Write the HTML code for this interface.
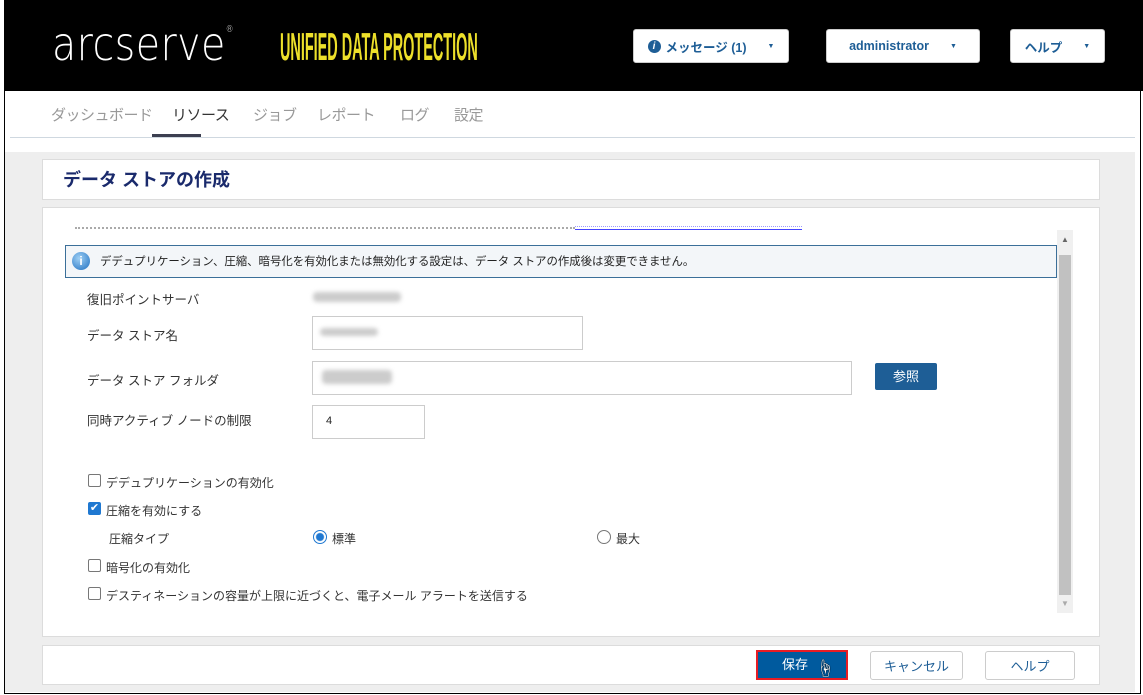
<!DOCTYPE html>
<html><head><meta charset="utf-8"><style>
*{box-sizing:border-box;margin:0;padding:0}
body{width:1143px;height:695px;background:#fff;position:relative;overflow:hidden;font-family:"Liberation Sans","Noto Sans CJK JP",sans-serif;font-size:13px;color:#222}
.a{position:absolute}
.frame{left:4px;top:0;width:1137px;height:694px;border:1px solid #000}
.hb{background:#fff;border-radius:3px;border:1px solid #ccc;color:#1e5e96;font-weight:bold;font-size:12.5px;display:flex;align-items:center;justify-content:center;gap:5px}
.car{font-size:7px;margin-left:16px}
.nav{top:104px;font-size:15px;color:#999;letter-spacing:-0.5px}
.pan{background:#fff;border:1px solid #dcdcdc}
.lab{left:87px;font-size:12.5px;color:#333}
.inp{border:1px solid #ccc;background:#fff}
.blur{background:#ccc;filter:blur(2px);border-radius:4px}
.cb{width:13px;height:13px;border:1px solid #777;border-radius:2px;background:#fff;left:88px}
.ct{left:106px;font-size:12px;color:#333}
.fb{border:1px solid #ccc;border-radius:3px;background:#fff;color:#1e5e96;font-size:13px;display:flex;align-items:center;justify-content:center}
</style></head><body>
<div class="a" style="left:5px;top:0;width:1138px;height:91px;background:#000"></div>
<div class="a" style="left:52px;top:17px;font-size:46px;color:#fff;font-family:'DejaVu Sans',sans-serif;font-weight:200;letter-spacing:0.5px;transform:scaleX(.86);transform-origin:left top;white-space:nowrap">arcserve<span style="font-size:9px;vertical-align:top;position:relative;top:8px">®</span></div>
<div class="a" style="left:280px;top:26px;font-size:39px;color:#ede02a;font-weight:bold;font-family:'Liberation Sans Narrow','Liberation Sans',sans-serif;transform:scaleX(.37);transform-origin:left top;white-space:nowrap">UNIFIED DATA PROTECTION</div>
<div class="a hb" style="left:633px;top:29px;width:156px;height:34px"><span style="display:inline-block;width:13px;height:13px;border-radius:50%;background:#1e5e96;color:#fff;font-size:10px;line-height:13px;text-align:center;font-style:italic">i</span>メッセージ (1)<span class="car">▼</span></div>
<div class="a hb" style="left:826px;top:29px;width:154px;height:34px">administrator<span class="car">▼</span></div>
<div class="a hb" style="left:1010px;top:29px;width:95px;height:34px">ヘルプ<span class="car">▼</span></div>

<div class="a nav" style="left:51px">ダッシュボード</div>
<div class="a nav" style="left:172px;color:#333">リソース</div>
<div class="a nav" style="left:253px">ジョブ</div>
<div class="a nav" style="left:317px">レポート</div>
<div class="a nav" style="left:400px">ログ</div>
<div class="a nav" style="left:454px">設定</div>
<div class="a" style="left:152px;top:134px;width:49px;height:3px;background:#3c3f50"></div>
<div class="a" style="left:10px;top:137px;width:1125px;height:1px;background:#cfd8e0"></div>

<div class="a" style="left:5px;top:152px;width:1130px;height:540px;background:#eeeeee"></div>
<div class="a pan" style="left:42px;top:159px;width:1058px;height:41px"></div>
<div class="a" style="left:63px;top:166px;font-size:18px;color:#1a2a6c;font-weight:bold">データ ストアの作成</div>

<div class="a pan" style="left:42px;top:207px;width:1058px;height:430px"></div>
<div class="a" style="left:75px;top:222px;width:500px;height:8px;overflow:hidden"><div style="border-top:2px dotted #aaa;margin-top:5px"></div></div>
<div class="a" style="left:575px;top:226px;width:227px;height:4px;border-bottom:1px solid #44f;border-top:1px dotted #99f"></div>
<div class="a" style="left:1057px;top:230px;width:16px;height:383px;background:#f0f0f0"></div>
<div class="a" style="left:1059px;top:255px;width:12px;height:340px;background:#c1c1c1"></div>
<div class="a" style="left:1061px;top:235px;font-size:8px;color:#666">▲</div>
<div class="a" style="left:1061px;top:599px;font-size:8px;color:#aaa">▼</div>

<div class="a" style="left:65px;top:245px;width:992px;height:33px;border:1px solid #3b6f99;background:#f3f6f9"></div>
<div class="a" style="left:72px;top:252px;width:18px;height:18px;border-radius:50%;background:radial-gradient(circle at 40% 35%,#9fd0f5,#1f6fc0);color:#fff;font-size:12px;font-weight:bold;text-align:center;line-height:18px">i</div>
<div class="a" style="left:100px;top:253px;font-size:11.4px;color:#222">デデュプリケーション、圧縮、暗号化を有効化または無効化する設定は、データ ストアの作成後は変更できません。</div>

<div class="a lab" style="top:289px">復旧ポイントサーバ</div>
<div class="a blur" style="left:313px;top:292px;width:88px;height:10px"></div>
<div class="a lab" style="top:325px">データ ストア名</div>
<div class="a inp" style="left:312px;top:316px;width:271px;height:34px"></div>
<div class="a blur" style="left:320px;top:328px;width:58px;height:8px"></div>
<div class="a lab" style="top:370px">データ ストア フォルダ</div>
<div class="a inp" style="left:312px;top:361px;width:540px;height:34px"></div>
<div class="a blur" style="left:322px;top:370px;width:70px;height:14px"></div>
<div class="a" style="left:875px;top:363px;width:62px;height:27px;background:#1e5e96;color:#fff;font-size:13px;text-align:center;line-height:27px;border-radius:2px">参照</div>
<div class="a lab" style="top:410px">同時アクティブ ノードの制限</div>
<div class="a inp" style="left:312px;top:405px;width:113px;height:34px"></div>
<div class="a" style="left:326px;top:415px;font-size:11px">4</div>

<div class="a cb" style="top:474px"></div><div class="a ct" style="top:474px">デデュプリケーションの有効化</div>
<div class="a cb" style="top:502px;background:#1f78d1;border-color:#1f78d1;color:#fff;font-size:11px;line-height:11px;text-align:center">✔</div><div class="a ct" style="top:502px">圧縮を有効にする</div>
<div class="a" style="left:109px;top:530px;font-size:12px;color:#333">圧縮タイプ</div>
<div class="a" style="left:313px;top:530px;width:14px;height:14px;border-radius:50%;border:1px solid #1f78d1;background:radial-gradient(circle,#1f78d1 3.5px,#fff 4.5px)"></div>
<div class="a" style="left:332px;top:530px;font-size:12px;color:#333">標準</div>
<div class="a" style="left:597px;top:530px;width:14px;height:14px;border-radius:50%;border:1px solid #777;background:#fff"></div>
<div class="a" style="left:616px;top:530px;font-size:12px;color:#333">最大</div>
<div class="a cb" style="top:559px"></div><div class="a ct" style="top:559px">暗号化の有効化</div>
<div class="a cb" style="top:587px"></div><div class="a ct" style="top:587px">デスティネーションの容量が上限に近づくと、電子メール アラートを送信する</div>

<div class="a pan" style="left:42px;top:645px;width:1058px;height:40px"></div>
<div class="a" style="left:756px;top:650px;width:92px;height:30px;border:2px solid #e81c24;background:#005a9e;color:#fff;font-size:13px;text-align:center;line-height:26px;padding-right:14px">保存</div>
<div class="a" style="left:816px;top:655px;font-size:18px;color:#fff;text-shadow:0 0 1px #000,0 0 1px #000">☝</div>
<div class="a fb" style="left:870px;top:651px;width:93px;height:29px">キャンセル</div>
<div class="a fb" style="left:985px;top:651px;width:90px;height:29px">ヘルプ</div>
<div class="a frame"></div>
</body></html>
